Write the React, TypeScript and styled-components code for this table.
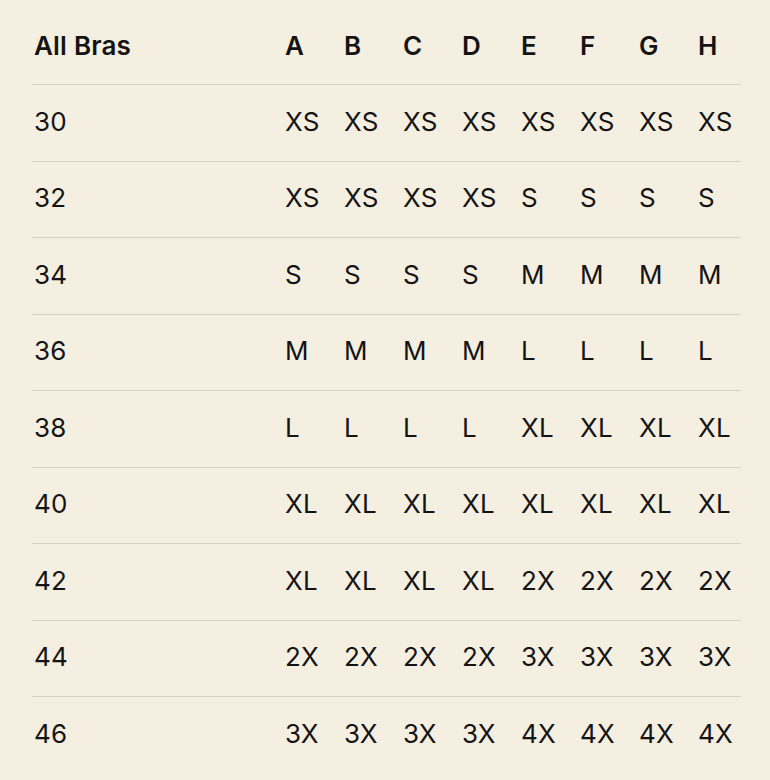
import React from "react";
import styled, { createGlobalStyle } from "styled-components";

const Global = createGlobalStyle`
  html, body {
    margin: 0;
    padding: 0;
    background: #f4efe1;
  }
  body {
    font-family: Inter, "Liberation Sans", Arial, sans-serif;
    color: #141414;
  }
`;

const Table = styled.div`
  padding: 8px 29px 0 32px;
  display: flex;
  flex-direction: column;
`;

const Row = styled.div<{ $header?: boolean }>`
  display: grid;
  grid-template-columns: 1fr repeat(7, 59px) 45px;
  align-items: center;
  box-sizing: border-box;
  height: ${(p) => (p.$header ? "76px" : "76.5px")};
  border-top: ${(p) => (p.$header ? "none" : "1px solid #d6d1c4")};
  padding-bottom: ${(p) => (p.$header ? "2px" : "3px")};
`;

const Cell = styled.div<{ $header?: boolean }>`
  padding-left: 2px;
  font-size: 26px;
  font-weight: ${(p) => (p.$header ? 600 : 400)};
  letter-spacing: 0.2px;
  white-space: nowrap;
`;

const cups = ["A", "B", "C", "D", "E", "F", "G", "H"];

const rows: [string, string[]][] = [
  ["30", ["XS", "XS", "XS", "XS", "XS", "XS", "XS", "XS"]],
  ["32", ["XS", "XS", "XS", "XS", "S", "S", "S", "S"]],
  ["34", ["S", "S", "S", "S", "M", "M", "M", "M"]],
  ["36", ["M", "M", "M", "M", "L", "L", "L", "L"]],
  ["38", ["L", "L", "L", "L", "XL", "XL", "XL", "XL"]],
  ["40", ["XL", "XL", "XL", "XL", "XL", "XL", "XL", "XL"]],
  ["42", ["XL", "XL", "XL", "XL", "2X", "2X", "2X", "2X"]],
  ["44", ["2X", "2X", "2X", "2X", "3X", "3X", "3X", "3X"]],
  ["46", ["3X", "3X", "3X", "3X", "4X", "4X", "4X", "4X"]],
];

export default function App() {
  return (
    <>
      <Global />
      <Table>
        <Row $header>
          <Cell $header>All Bras</Cell>
          {cups.map((c) => (
            <Cell $header key={c}>
              {c}
            </Cell>
          ))}
        </Row>
        {rows.map(([band, sizes]) => (
          <Row key={band}>
            <Cell>{band}</Cell>
            {sizes.map((s, i) => (
              <Cell key={i}>{s}</Cell>
            ))}
          </Row>
        ))}
      </Table>
    </>
  );
}
